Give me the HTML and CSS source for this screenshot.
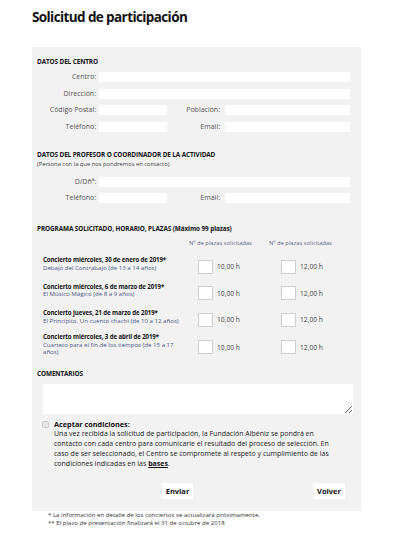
FILE: index.html
```html
<!DOCTYPE html>
<html lang="es">
<head>
<meta charset="utf-8">
<title>Solicitud de participación</title>
<link rel="stylesheet" href="styles.css">
</head>
<body>
<h1 class="title">Solicitud de participación</h1>
<form class="panel">
  <h2 class="sec-title first">DATOS DEL CENTRO</h2>
  <div class="fields">
    <label class="lbl">Centro:</label><input class="inp span3" type="text">
    <label class="lbl">Dirección:</label><input class="inp span3" type="text">
    <label class="lbl">Código Postal:</label><input class="inp" type="text">
    <label class="lbl lbl2">Población:</label><input class="inp" type="text">
    <label class="lbl">Teléfono:</label><input class="inp" type="text">
    <label class="lbl lbl2">Email:</label><input class="inp" type="text">
  </div>

  <h2 class="sec-title second">DATOS DEL PROFESOR O COORDINADOR DE LA ACTIVIDAD</h2>
  <p class="sec-sub">(Persona con la que nos pondremos en contacto)</p>
  <div class="fields fields2">
    <label class="lbl">D/Dñª:</label><input class="inp span3" type="text">
    <label class="lbl">Teléfono:</label><input class="inp" type="text">
    <label class="lbl lbl2">Email:</label><input class="inp" type="text">
  </div>

  <h2 class="sec-title third">PROGRAMA SOLICITADO, HORARIO, PLAZAS (Máximo 99 plazas)</h2>
  <div class="prog-head">
    <span></span>
    <span class="col-h">Nº de plazas solicitadas</span>
    <span class="col-h">Nº de plazas solicitadas</span>
  </div>
  <div class="concert">
    <div class="c-text"><strong>Concierto miércoles, 30 de enero de 2019*</strong><span class="c-sub">Debajo del Contrabajo (de 13 a 14 años)</span></div>
    <div class="slot s1"><input class="qty" type="text"><span>10,00 h</span></div>
    <div class="slot s2"><input class="qty" type="text"><span>12,00 h</span></div>
  </div>
  <div class="concert">
    <div class="c-text"><strong>Concierto miércoles, 6 de marzo de 2019*</strong><span class="c-sub">El Músico Mágico (de 8 a 9 años)</span></div>
    <div class="slot s1"><input class="qty" type="text"><span>10,00 h</span></div>
    <div class="slot s2"><input class="qty" type="text"><span>12,00 h</span></div>
  </div>
  <div class="concert">
    <div class="c-text"><strong>Concierto jueves, 21 de marzo de 2019*</strong><span class="c-sub">El Principito. Un cuento chachi (de 10 a 12 años)</span></div>
    <div class="slot s1"><input class="qty" type="text"><span>10,00 h</span></div>
    <div class="slot s2"><input class="qty" type="text"><span>12,00 h</span></div>
  </div>
  <div class="concert">
    <div class="c-text"><strong>Concierto miércoles, 3 de abril de 2019*</strong><span class="c-sub">Cuarteto para el fin de los tiempos (de 15 a 17 años)</span></div>
    <div class="slot s1"><input class="qty" type="text"><span>10,00 h</span></div>
    <div class="slot s2"><input class="qty" type="text"><span>12,00 h</span></div>
  </div>

  <h2 class="sec-title fourth">COMENTARIOS</h2>
  <textarea class="comments"></textarea>

  <div class="accept">
    <span class="check"></span>
    <div class="accept-text">
      <strong>Aceptar condiciones:</strong>
      <p>Una vez recibida la solicitud de participación, la Fundación Albéniz se pondrá en contacto con cada centro para comunicarle el resultado del proceso de selección. En caso de ser seleccionado, el Centro se compromete al respeto y cumplimiento de las condiciones indicadas en las <a class="link" href="#">bases</a>.</p>
    </div>
  </div>

  <div class="buttons">
    <button class="btn" type="button">Enviar</button>
    <button class="btn back" type="button">Volver</button>
  </div>
</form>
<div class="notes">
  <p>* La información en detalle de los conciertos se actualizará próximamente.</p>
  <p>** El plazo de presentación finalizará el 31 de octubre de 2018</p>
</div>
</body>
</html>
```

FILE: styles.css
```css
* { box-sizing: border-box; }
body {
  margin: 0;
  background: #fff;
  font-family: "Open Sans", "Liberation Sans", sans-serif;
  color: #222;
}
.title {
  margin: 0;
  padding: 7px 0 0 32px;
  font-size: 13.5px;
  line-height: 20px;
  font-weight: 700;
  letter-spacing: -0.6px;
  color: #111;
}
.panel {
  margin: 20px 0 0 32px;
  width: 329px;
  background: #f2f2f2;
  padding: 11px 0 12px 5px;
}
.sec-title {
  margin: 0;
  font-size: 6.4px;
  line-height: 8px;
  font-weight: 700;
  color: #111;
  letter-spacing: -0.1px;
}
.sec-title.second { margin-top: 19px; }
.sec-title.third { margin-top: 22px; }
.sec-title.fourth { margin-top: 14px; }
.sec-sub {
  margin: 1px 0 0;
  font-size: 5.8px;
  line-height: 8px;
  color: #444;
}
.fields {
  margin-top: 6px;
  display: grid;
  grid-template-columns: 62px 68px 58px 125px;
  grid-auto-rows: 10px;
  row-gap: 6.5px;
  align-items: center;
}
.fields2 { margin-top: 9px; row-gap: 6px; }
.lbl {
  text-align: right;
  padding-right: 3px;
  font-size: 7px;
  line-height: 10px;
  color: #555;
  white-space: nowrap;
}
.lbl2 { padding-right: 5px; }
.inp {
  display: block;
  height: 10px;
  width: 100%;
  border: none;
  background: #fff;
  margin: 0;
  padding: 0;
}
.span3 { grid-column: 2 / 5; }
.prog-head {
  margin-top: 6px;
  display: grid;
  grid-template-columns: 152px 80px 1fr;
  font-size: 5.8px;
  line-height: 8px;
  color: #5a6282;
}
.concert {
  margin-top: 7px;
  display: grid;
  grid-template-columns: 152px 80px 1fr;
  align-items: center;
}
.concert + .concert { margin-top: 6.5px; }
.c-text {
  padding-left: 6px;
  padding-right: 10px;
  font-size: 6.1px;
  line-height: 7.5px;
  color: #111;
  display: flex;
  flex-direction: column;
}
.c-text strong { font-weight: 700; letter-spacing: -0.1px; }
.c-sub { color: #4a5685; }
.slot {
  display: flex;
  align-items: center;
  gap: 4px;
  margin-top: 6px;
  font-size: 6.7px;
  color: #444;
}
.s1 { padding-left: 9px; }
.s2 { padding-left: 12px; }
.qty {
  display: block;
  width: 15px;
  height: 14px;
  margin: 0;
  padding: 0;
  border: 1px solid #cfcfcf;
  background: #fff;
}
.comments {
  display: block;
  margin: 6px 0 0 6px;
  width: 310px;
  height: 30px;
  border: none;
  background: #fff;
  padding: 0;
  resize: both;
}
.accept {
  margin-top: 5px;
  display: flex;
  align-items: flex-start;
  padding-left: 5px;
}
.check {
  flex: none;
  width: 7px;
  height: 7px;
  margin-top: 2px;
  border: 1px solid #c9c9c9;
  border-radius: 1.5px;
  background: #e6e6e6;
}
.accept-text {
  margin-left: 5px;
  width: 285px;
  font-size: 7px;
  line-height: 10px;
  color: #222;
}
.accept-text strong { display: block; font-weight: 700; color: #111; font-size: 7.3px; }
.accept-text p { margin: 0; }
.link { color: #111; font-weight: 700; text-decoration: underline; }
.buttons {
  margin-top: 14px;
  display: flex;
  padding: 0 16px 0 125px;
}
.btn {
  height: 16px;
  width: 31px;
  padding: 0;
  border: none;
  border-radius: 2px;
  background: #fff;
  font-family: "Open Sans", "Liberation Sans", sans-serif;
  font-size: 7.5px;
  font-weight: 700;
  color: #111;
}
.btn.back { margin-left: auto; width: 32px; }
.notes {
  padding-left: 48px;
  font-size: 6.1px;
  line-height: 8px;
  color: #333;
}
.notes p { margin: 0; }
```
